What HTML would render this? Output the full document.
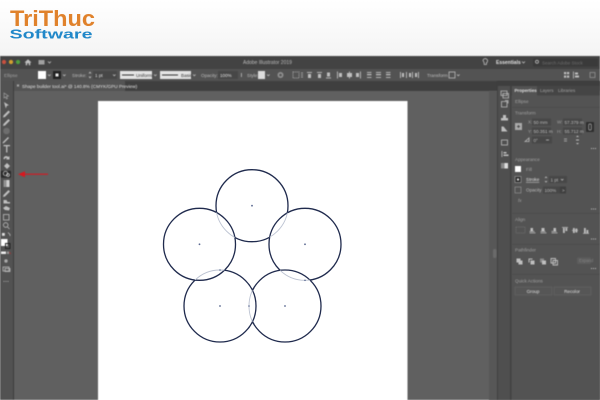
<!DOCTYPE html>
<html><head><meta charset="utf-8"><style>
html,body{margin:0;padding:0;background:#fff;width:600px;height:400px;overflow:hidden}
svg{display:block}
text{font-family:"Liberation Sans",sans-serif}
.u{filter:blur(.5px)}
.c{filter:blur(.25px)}
.l{font-size:4.6px;fill:#bcbcbc}
.b{font-size:4.6px;fill:#e0e0e0}
.g{font-size:4.6px;fill:#a0a0a0}
.s{fill:none;stroke:#bcbcbc;stroke-width:.8}
.d{fill:#bfbfbf}
</style></head><body>
<svg width="600" height="400" viewBox="0 0 600 400" xmlns="http://www.w3.org/2000/svg">
<defs>
<linearGradient id="hd" x1="0" y1="0" x2="0" y2="1"><stop offset="0" stop-color="#fff"/><stop offset="1" stop-color="#f4f4f4"/></linearGradient>
<clipPath id="cT"><circle cx="252" cy="205.7" r="36"/></clipPath>
<clipPath id="cL"><circle cx="199.5" cy="244.3" r="36"/></clipPath>
<clipPath id="cR"><circle cx="305" cy="244.3" r="36"/></clipPath>
<clipPath id="cBL"><circle cx="220" cy="306" r="36"/></clipPath>
<clipPath id="cBR"><circle cx="285" cy="306" r="36"/></clipPath>
</defs>
<rect width="600" height="56" fill="url(#hd)"/>
<g class="c">
<text x="10" y="26" font-size="22.500" font-weight="bold" fill="#e0822c" textLength="85" lengthAdjust="spacingAndGlyphs">TriThuc</text>
<text x="9.500" y="38.500" font-size="13" font-weight="bold" fill="#2188c9" textLength="83" lengthAdjust="spacingAndGlyphs">Software</text>
</g>

<g class="u">
<rect y="56" width="600" height="13" fill="#434343"/>
<rect y="69" width="600" height="12" fill="#535353"/>
<rect y="81" width="600" height="10" fill="#3f3f3f"/>
<rect y="91" width="600" height="309" fill="#606060"/>
<rect x="0" y="81" width="13" height="319" fill="#525252"/>
<rect x="13" y="81" width="1" height="319" fill="#3c3c3c"/>
<rect x="14" y="81" width="111" height="10" fill="#545454"/>

<!-- title bar -->
<circle cx="4" cy="62" r="2.100" fill="#c9503f"/><circle cx="11" cy="62" r="2.100" fill="#d3a02f"/><circle cx="18" cy="62" r="2.100" fill="#4fa03f"/>
<path d="M24.500 62.500L28 59.200L31.500 62.500H30.300V65.300H28.800V63.300H27.200V65.300H25.700V62.500Z" class="d"/>
<rect x="38.500" y="60" width="6" height="4.500" fill="#a0a0a0"/><path d="M48 61.500l1.500 1.500 1.500-1.500" class="s"/>
<text x="243" y="63.800" class="l" style="font-size:5px">Adobe Illustrator 2019</text>
<path d="M483 60.500a2.300 2.300 0 1 1 3.400 2.400v1.600h-2.200v-1.600z" class="s"/>
<text x="496" y="64" class="b" style="font-size:5px;font-weight:bold">Essentials</text><path d="M522 61.500l1.500 1.500 1.500-1.500" class="s"/>
<rect x="533" y="58.500" width="65" height="8" rx="1" fill="#3a3a3a"/>
<text x="542" y="64.300" style="font-size:4.500px;fill:#6e6e6e">Search Adobe Stock</text>
<circle cx="537" cy="61.800" r="1.500" class="s"/>

<!-- control bar -->
<text x="4" y="76.800" class="g">Ellipse</text>
<rect x="38" y="71" width="8" height="8" fill="#fff"/><path d="M48 74.500l1.300 1.300 1.300-1.300" class="s"/>
<rect x="53" y="71" width="8" height="8" fill="#222"/><rect x="55.500" y="73.500" width="3" height="3" fill="#eee"/><path d="M63 74.500l1.300 1.300 1.300-1.300" class="s"/>
<text x="72" y="76.800" class="l">Stroke:</text>
<path d="M89 73.500l1-1.300 1 1.300M89 76.500l1 1.300 1-1.300" class="s"/>
<rect x="93" y="71" width="24" height="8" fill="#474747"/><text x="95" y="76.800" class="b">1 pt</text><path d="M113 74.500l1.300 1.300 1.300-1.300" class="s"/>
<rect x="120" y="71" width="32" height="8" fill="#e4e4e4"/><rect x="122" y="74.500" width="12" height="1" fill="#333"/><text x="136" y="76.800" style="font-size:4.600px;fill:#333">Uniform</text><path d="M154 74.500l1.300 1.300 1.300-1.300" class="s"/>
<rect x="160" y="71" width="31" height="8" fill="#e4e4e4"/><rect x="162" y="74.500" width="16" height="1" fill="#333"/><text x="181" y="76.800" style="font-size:4.600px;fill:#333">Basic</text><path d="M193 74.500l1.300 1.300 1.300-1.300" class="s"/>
<text x="201" y="76.800" class="l">Opacity:</text>
<rect x="218" y="71" width="20" height="8" fill="#474747"/><text x="220" y="76.800" class="b">100%</text><rect x="241" y="73" width=".8" height="4" fill="#bbb"/>
<text x="247" y="76.800" class="l">Style:</text>
<rect x="258" y="71" width="7" height="8" fill="#dcdcdc"/><path d="M267 74.500l1.300 1.300 1.300-1.300" class="s"/>
<circle cx="280.500" cy="75" r="3" fill="#909090"/><circle cx="280.500" cy="75" r="1.300" fill="#555"/>
<rect x="293" y="72" width="6" height="6" class="s" stroke-dasharray="1 .8"/><path d="M301 73h2M301 75h2M301 77h2" class="s"/>
<g class="d">
<path d="M307 72h5v.9h-5zM308 74h3v4h-3z"/><path d="M317 72h5v.9h-5zM318 74h3v4h-3z"/><path d="M326 77.500h5v.9h-5zM327 72.500h3v4h-3z"/>
<path d="M337 71.500h.9v7h-.9zM339 73h3v4h-3z"/><path d="M349 71.500h.9v7h-.9zM347 73h5v4h-5z"/><path d="M360 71.500h.9v7h-.9zM356 73h3v4h-3z"/>
<path d="M367 72h4.500v.9H367zM367 74h4.500v1.200H367zM367 77h4.500v.9H367z"/><path d="M376 72h5v.9h-5zM376 74h5v1.200h-5zM376 77h5v.9h-5z"/><path d="M386 72h4.500v.9H386zM386 74h4.500v1.200H386zM386 77h4.500v.9H386z"/>
<path d="M400 72h.9v6h-.9zM402 73h2v4h-2zM406 72h.9v6h-.9zM409 73h2v4h-2zM412 72h.9v6h-.9zM415 73h2v4h-2zM418 72h.9v6h-.9z"/>
</g>
<text x="427" y="76.800" class="l">Transform</text>
<rect x="449" y="72" width="6" height="6" class="s"/><path d="M457 74.500l1.300 1.300 1.300-1.300" class="s"/>
<path d="M564 72h2.200v2.200H564zM567 72h2.200v2.200H567zM564 75.500h2.200v2.200H564zM567 75.500h2.200v2.200H567z" class="d"/>
<path d="M573 71.500h.8v7H573zM575 72.500h3v2h-3zM575 75.500h4v2h-4z" class="d"/>
<rect x="590" y="72.500" width="5" height="5" class="s" opacity=".6"/>

<!-- tab -->
<path d="M17 84.500l2 2M19 84.500l-2 2" class="s"/>
<text x="22" y="87.800" class="b" style="font-size:4.700px">Shape builder tool.ai* @ 140.8% (CMYK/GPU Preview)</text>

<!-- artboard -->
<rect x="98" y="101" width="309.500" height="299" fill="#fff"/>
</g>

<!-- circles -->
<g class="c">
<g fill="#fff" stroke="#1f2a4d" stroke-width="1.300">
<circle cx="252" cy="205.700" r="36"/>
<circle cx="305" cy="244.300" r="36"/>
<circle cx="285" cy="306" r="36"/>
<circle cx="220" cy="306" r="36"/>
<circle cx="199.500" cy="244.300" r="36"/>
</g>
<g fill="none" stroke="#bcc3d2" stroke-width=".9">
<circle cx="252" cy="205.700" r="36" clip-path="url(#cL)"/>
<circle cx="252" cy="205.700" r="36" clip-path="url(#cR)"/>
<circle cx="220" cy="306" r="36" clip-path="url(#cL)"/>
<circle cx="305" cy="244.300" r="36" clip-path="url(#cBR)"/>
<circle cx="285" cy="306" r="36" clip-path="url(#cBL)"/>
</g>
<g fill="#5a6890">
<circle cx="252" cy="205.700" r=".9"/><circle cx="199.500" cy="244.300" r=".9"/><circle cx="305" cy="244.300" r=".9"/><circle cx="220" cy="306" r=".9"/><circle cx="285" cy="306" r=".9"/>
<circle cx="249" cy="306" r=".8"/><circle cx="220" cy="270" r=".8"/><circle cx="305" cy="280.300" r=".8"/>
</g>
</g>

<g class="u">
<!-- left toolbar -->
<g class="d">
<path d="M4 93l4.500 3-2 .5 1 2-1 .5-1-2-1.500 1z" fill="none" stroke="#aaa" stroke-width=".6"/>
<path d="M4 102l5 3.300-2.200.5-1 2.700z"/>
<path d="M3.500 115.500l5-5 1.500 1.500-5 5-2 .5z"/>
<path d="M3.500 124l5-5 1.500 1.500-5 5-2 .5z"/>
<circle cx="6.500" cy="131" r="3.300" fill="#6e6e6e"/>
<path d="M3 142l5-5 1 1-5 5-1.500.5z"/>
<path d="M3.500 145h6.500v1.200H7.400v6.300H6.100v-6.300H3.500z"/>
<path d="M3.500 159c0-3 3-3.500 5-2l1-1v3.500H6l1-1c-1-.8-2-.5-2.300.7z"/>
<path d="M4 166l3-3 3 3-3 3z"/>
</g>
<rect x="1" y="170.700" width="10" height="7" rx="1" fill="#2a2a2a"/>
<circle cx="5.500" cy="173.500" r="2.200" fill="none" stroke="#ddd" stroke-width=".7"/><circle cx="8" cy="175" r="1.400" fill="none" stroke="#ddd" stroke-width=".7"/>
<rect x="3.500" y="180" width="6" height="7" fill="#909090"/><rect x="6.500" y="180" width="3" height="7" fill="#cfcfcf"/>
<path d="M3.500 195l5-5 1.500 1.500-5 5-2 .5z" class="d"/>
<path d="M3.500 200h3l1 2h2.500v1.500H3.500z" class="d"/>
<path d="M3 208l3-2 4 2-1 2.500-4-.5z" class="d"/>
<rect x="3.500" y="214.500" width="5.500" height="5.500" class="s"/>
<circle cx="5.700" cy="225" r="2.300" class="s"/><path d="M7.500 227l2 2" class="s"/>
<path d="M2 233h2.800v2.800H2z" fill="#e0e0e0"/><path d="M8 232.500l2 2v1.500" class="s"/>
<rect x="1" y="239" width="6.500" height="7" fill="#fff"/>
<rect x="5.500" y="243.500" width="4.500" height="5" fill="none" stroke="#222" stroke-width="1"/>
<rect x="1" y="251.500" width="5" height="2.500" fill="#eee"/><rect x="7" y="251.500" width="2" height="2.500" fill="#999"/><path d="M9.300 252l1.500 2" stroke="#a33" stroke-width=".7"/>
<circle cx="6" cy="261" r="1.700" fill="#aaa"/>
<rect x="3" y="267" width="6" height="4" class="s"/><rect x="5" y="268.500" width="5" height="3" class="s"/>
<path d="M3.500 281h1v.8h-1zM5.500 281h1v.8h-1zM7.500 281h1v.8h-1z" class="d"/>

<!-- red arrow -->
<path d="M48 174.200H24" stroke="#d8181f" stroke-width="1.100"/>
<path d="M18 174.200l7-3v6z" fill="#d8181f"/>

<!-- right dock -->
<rect x="489" y="91" width="8" height="309" fill="#575757"/>
<rect x="497" y="81" width="103" height="319" fill="#535353"/>
<rect x="497" y="81" width="103" height="5" fill="#3e3e3e"/>
<rect x="497" y="86" width="1" height="314" fill="#404040"/>
<rect x="510" y="86" width="1.500" height="314" fill="#424242"/>
<rect x="511.500" y="86" width="88.500" height="9.500" fill="#454545"/>
<rect x="512" y="86" width="25" height="9.500" fill="#535353"/>
<rect x="493" y="249" width="3.500" height="9" rx="1.500" fill="#6a6a6a"/>
<rect x="498" y="86" width="12" height="314" fill="#4f4f4f"/>
<path d="M501 91h6v4.500h-6z M503 93.500h5.500v4.500H503z" class="s"/>
<path d="M501.500 101.500h5.500v5.500h-5.500zM505 100.500h3v3" class="s"/>
<path d="M501 118h7v2.500h-7zM503 115h3v3h-3z" class="d"/>
<path d="M501.500 131.500v-5l2 0 4 5z" class="d"/>
<rect x="501.500" y="140" width="6" height="5" class="s"/>
<path d="M501.500 151h.8v6h-.8zM503.500 152h3v1.500h-3zM503.500 154.500h5v1.500h-5z" class="d"/>
<rect x="501" y="163" width="7" height="5.500" fill="#ddd"/><rect x="501" y="163" width="3.500" height="5.500" fill="#8a8a8a"/>

<!-- properties tabs -->
<text x="514.500" y="92" class="b" style="font-weight:bold;font-size:4.500px">Properties</text>
<text x="540" y="92" class="g" style="font-size:4.500px">Layers</text>
<text x="558" y="92" class="g" style="font-size:4.500px">Libraries</text>
<text x="515" y="103" class="g">Ellipse</text>
<rect x="512" y="107" width="88" height=".6" fill="#484848"/>
<text x="515" y="114.500" class="g">Transform</text>

<rect x="515" y="123" width="7" height="7" fill="#aaa"/><path d="M518.500 125v3M517 126.500h3" stroke="#333" stroke-width=".7"/>
<text x="528" y="123.500" class="g">X:</text><rect x="532" y="118.500" width="19" height="7" fill="#474747"/><text x="533.500" y="123.800" class="l">50 mm</text>
<text x="557" y="123.500" class="g">W:</text><rect x="563" y="118.500" width="19" height="7" fill="#474747"/><text x="564.500" y="123.800" class="l">57.379 m</text>
<text x="528" y="132.800" class="g">Y:</text><rect x="532" y="127.500" width="19" height="7" fill="#474747"/><text x="533.500" y="132.800" class="l">50.351 m</text>
<text x="557" y="132.800" class="g">H:</text><rect x="563" y="127.500" width="19" height="7" fill="#474747"/><text x="564.500" y="132.800" class="l">55.712 m</text>
<rect x="586" y="122" width="8" height="10" rx="1" fill="#2e2e2e"/><rect x="588.700" y="124" width="2.600" height="6" rx="1" fill="none" stroke="#aaa" stroke-width=".7"/>
<path d="M525 141.500l4-3.500v3.500z" class="s"/>
<rect x="532" y="136.500" width="20" height="7" fill="#474747"/><text x="533.500" y="141.800" class="l">0°</text><path d="M546 140h3" class="s"/>
<path d="M564 139h3M564 141h3" class="s"/>
<path d="M576 137l1.500-1.500 1.500 1.500h-3zM576 143h3l-1.500 1.500z" class="d"/><rect x="576" y="139.500" width="3" height="1" class="d"/>
<path d="M591 148h1v1h-1zM593 148h1v1h-1zM595 148h1v1h-1z" class="d"/>

<text x="515" y="161" class="g">Appearance</text>
<rect x="515" y="166" width="6" height="6" fill="#fff"/><text x="526" y="171" class="g">Fill</text>
<rect x="515" y="176.500" width="6" height="6" fill="#2a2a2a" stroke="#aaa" stroke-width=".6"/><rect x="517" y="178.500" width="2" height="2" fill="#ddd"/>
<text x="526" y="181.200" class="b" style="text-decoration:underline">Stroke</text>
<path d="M545 178l1-1 1 1M545 181l1 1 1-1" class="s"/><rect x="549" y="176" width="18" height="7" fill="#474747"/><text x="550.500" y="181.300" class="l">1 pt</text><path d="M561 179l1.200 1.200 1.200-1.200" class="s"/>
<rect x="515" y="187" width="6" height="6" fill="none" stroke="#999" stroke-width=".6"/>
<text x="526" y="191.500" class="l">Opacity</text><rect x="543" y="186.500" width="17" height="7" fill="#474747"/><text x="544.500" y="191.800" class="l">100%</text><rect x="560" y="186.500" width="6" height="7" fill="#3f3f3f"/><text x="562" y="191.800" class="l">&gt;</text>
<text x="518" y="202" class="g" style="font-style:italic">fx</text>
<path d="M591 208.500h1v1h-1zM593 208.500h1v1h-1zM595 208.500h1v1h-1z" class="d"/>
<rect x="512" y="213" width="88" height=".6" fill="#484848"/>

<text x="515" y="221" class="g">Align</text>
<rect x="516" y="227" width="9" height="6" fill="none" stroke="#888" stroke-width=".5" stroke-dasharray="1 .8"/>
<g class="d">
<path d="M529.500 231h5v.8h-5zM530.500 228h2.500v3h-2.500zM529.500 232.500h6v.8h-6z"/>
<path d="M540.500 231h5v.8h-5zM541.500 228h3v3h-3zM540.500 232.500h6v.8h-6z"/>
<path d="M551.500 231h5v.8h-5zM553.500 228h2.500v3h-2.500zM551.500 232.500h6v.8h-6z"/>
<path d="M562 227h6v.8h-6zM563 228h1.800v5H563zM565.500 228h1.800v3h-1.800z"/>
<path d="M572 230h6v.8h-6zM573 228h1.800v5H573zM575.500 228.500h1.800v4h-1.800z"/>
<path d="M583 233h6v.8h-6zM584 228h1.800v5H584zM586.500 230h1.800v3h-1.800z"/>
</g>
<path d="M591 238.500h1v1h-1zM593 238.500h1v1h-1zM595 238.500h1v1h-1z" class="d"/>
<rect x="512" y="244" width="88" height=".6" fill="#484848"/>

<text x="515" y="251.500" class="g">Pathfinder</text>
<g class="d">
<path d="M516.500 258.500h4v4h-4zM518.500 260.500h4v4h-4z"/>
<path d="M528.500 258.500h4v1h-3v3h-1z"/><rect x="530.500" y="260.500" width="4" height="4"/>
<path d="M540 258.500h4v4h-4z" opacity=".5"/><rect x="542" y="260.500" width="4" height="4"/>
<path d="M551 258.500h4.500v4.500H551zM553 260.500h4.500v4.500H553z" fill="none" stroke="#bfbfbf" stroke-width=".9"/>
</g>
<rect x="577" y="257.500" width="14" height="6.500" rx="1" fill="#5d5d5d"/><text x="579" y="262.200" style="font-size:4.200px;fill:#808080">Expand</text>
<path d="M591 268h1v1h-1zM593 268h1v1h-1zM595 268h1v1h-1z" class="d"/>
<rect x="512" y="274" width="88" height=".6" fill="#484848"/>

<text x="515" y="282.500" class="g">Quick Actions</text>
<rect x="515" y="287" width="37" height="8" fill="#565656" stroke="#686868" stroke-width=".5"/>
<text x="533" y="292.800" text-anchor="middle" class="b">Group</text>
<rect x="554" y="287" width="37" height="8" fill="#565656" stroke="#686868" stroke-width=".5"/>
<text x="572" y="292.800" text-anchor="middle" class="b">Recolor</text>
</g>
</svg>
</body></html>
